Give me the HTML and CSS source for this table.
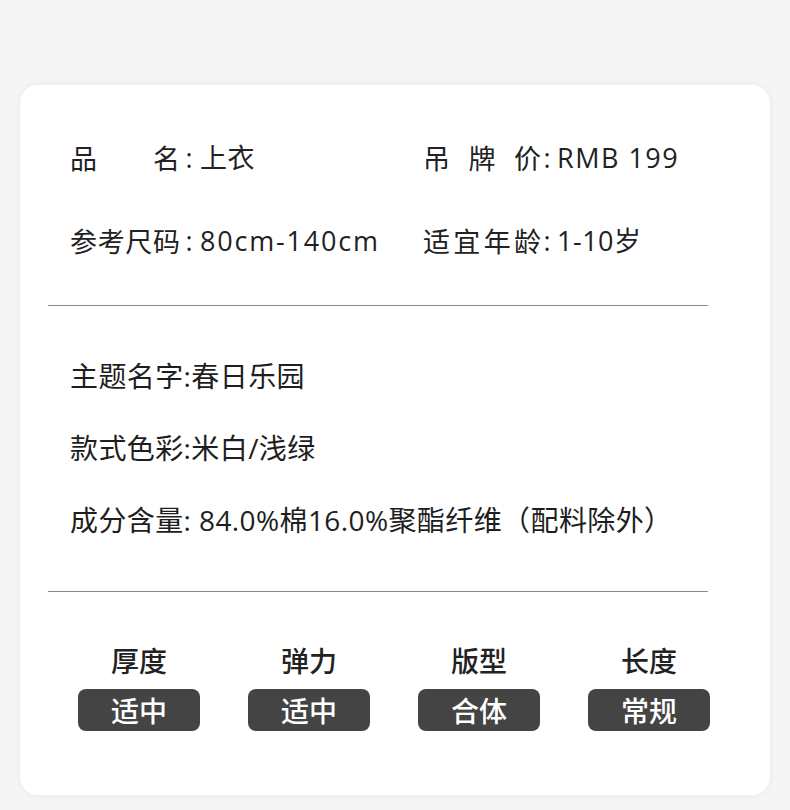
FILE: index.html
```html
<!DOCTYPE html>
<html lang="zh">
<head>
<meta charset="utf-8">
<link rel="stylesheet" href="styles.css">
</head>
<body>
<div class="card">
  <div class="sec sec-top">
    <div class="row">
      <div class="cell cell-left"><span class="lbl"><span>品</span><span>名</span></span><span class="colon">:</span><span class="val">上衣</span></div>
      <div class="cell cell-right"><span class="lbl"><span>吊</span><span>牌</span><span>价</span></span><span class="colon">:</span><span class="val val-wide">RMB 199</span></div>
    </div>
    <div class="row">
      <div class="cell cell-left"><span class="lbl"><span>参</span><span>考</span><span>尺</span><span>码</span></span><span class="colon">:</span><span class="val val-num">80cm-140cm</span></div>
      <div class="cell cell-right"><span class="lbl"><span>适</span><span>宜</span><span>年</span><span>龄</span></span><span class="colon">:</span><span class="val">1-10岁</span></div>
    </div>
  </div>
  <div class="divider"></div>
  <div class="sec sec-mid">
    <div class="line">主题名字:春日乐园</div>
    <div class="line">款式色彩:米白/浅绿</div>
    <div class="line">成分含量: 84.0%棉16.0%聚酯纤维（配料除外）</div>
  </div>
  <div class="divider"></div>
  <div class="sec sec-bot">
    <div class="attr"><div class="attr-name">厚度</div><div class="badge">适中</div></div>
    <div class="attr"><div class="attr-name">弹力</div><div class="badge">适中</div></div>
    <div class="attr"><div class="attr-name">版型</div><div class="badge">合体</div></div>
    <div class="attr"><div class="attr-name">长度</div><div class="badge">常规</div></div>
  </div>
</div>
</body>
</html>
```

FILE: styles.css
```css
* { box-sizing: border-box; }
html, body { margin: 0; padding: 0; }
body {
  background: #f5f5f5;
  font-family: "Open Sans", "Noto Sans CJK SC", sans-serif;
  color: #222;
  padding: 85px 0 0 20px;
  width: 790px;
  height: 810px;
}
.card {
  width: 750px;
  height: 710px;
  background: #fff;
  border-radius: 18px;
  box-shadow: 0 0 6px rgba(0, 0, 0, 0.06);
  padding: 0 62px 0 28px;
}
.sec-top {
  padding: 53px 0 44px 22px;
  display: flex;
  flex-direction: column;
  gap: 43px;
}
.row {
  display: flex;
  height: 40px;
  align-items: center;
  font-size: 27px;
  line-height: 40px;
}
.cell { display: flex; align-items: center; white-space: nowrap; }
.cell-left { width: 353px; }
.lbl {
  display: flex;
  justify-content: space-between;
  font-family: "Noto Sans CJK SC", sans-serif;
}
.cell-left .lbl { width: 110px; }
.cell-right .lbl { width: 118px; }
.colon { text-align: center; }
.cell-left .colon { width: 18px; }
.cell-right .colon { width: 12px; }
.val { letter-spacing: 0.5px; }
.cell-left .val { margin-left: 2px; }
.cell-right .val { margin-left: 4px; }
.val-wide { letter-spacing: 1.5px; }
.val-num { letter-spacing: 1.8px; }
.divider {
  height: 1px;
  background: #8a8a8a;
  width: 660px;
}
.sec-mid {
  padding: 50px 0 51px 22px;
  display: flex;
  flex-direction: column;
  gap: 32px;
}
.line {
  height: 40px;
  line-height: 40px;
  font-size: 28px;
  letter-spacing: 0.4px;
  color: #1e1e1e;
  white-space: nowrap;
}
.sec-bot {
  display: grid;
  grid-template-columns: repeat(4, 170px);
  padding: 48px 0 0 6px;
}
.attr {
  display: flex;
  flex-direction: column;
  align-items: center;
  gap: 9px;
}
.attr-name {
  height: 40px;
  line-height: 40px;
  font-size: 28px;
  font-weight: 500;
  font-family: "Noto Sans CJK SC", sans-serif;
}
.badge {
  width: 122px;
  height: 42px;
  border-radius: 8px;
  background: #444;
  color: #fff;
  font-size: 28px;
  font-weight: 500;
  line-height: 42px;
  text-align: center;
  font-family: "Noto Sans CJK SC", sans-serif;
}
```
